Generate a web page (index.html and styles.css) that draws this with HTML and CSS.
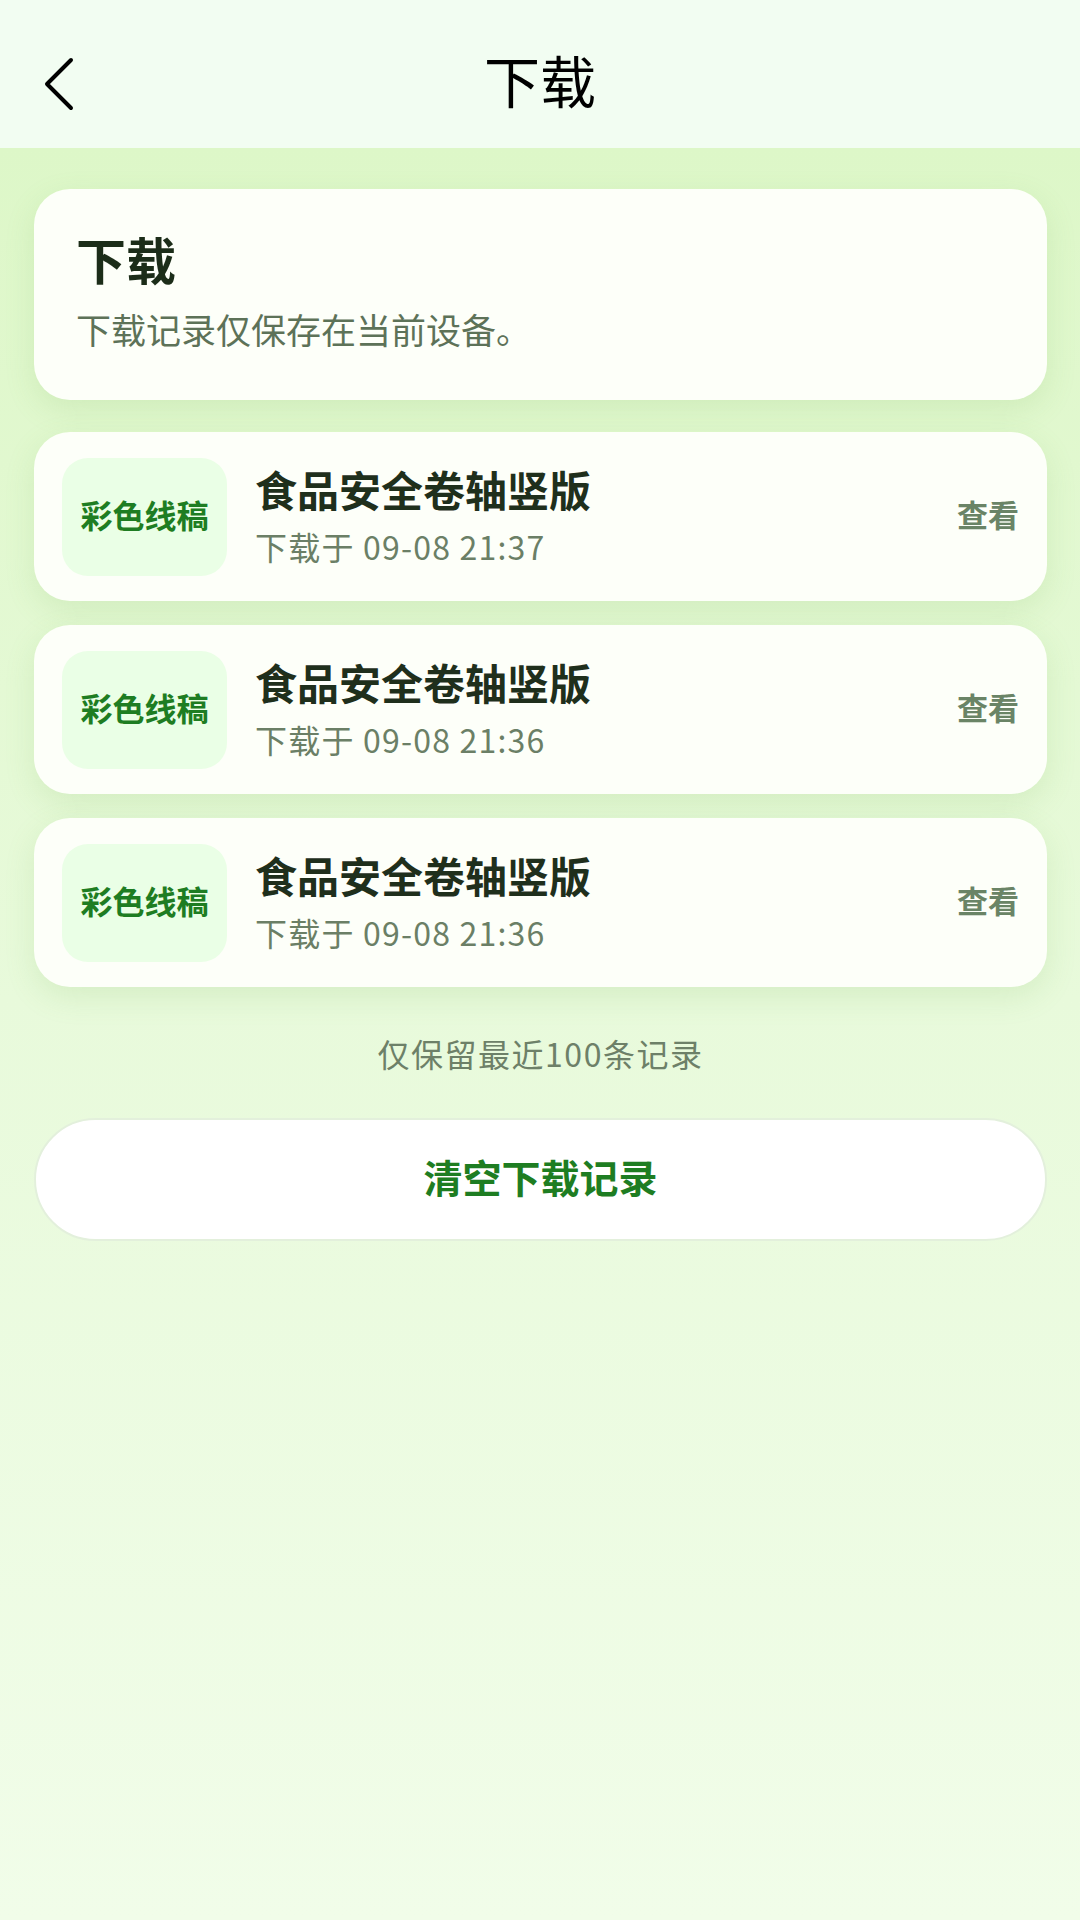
FILE: index.html
```html
<!DOCTYPE html>
<html lang="zh-CN">
<head>
  <meta charset="UTF-8">
  <meta name="viewport" content="width=device-width, initial-scale=1.0">
  <title>下载</title>
  <link rel="stylesheet" href="styles.css">
</head>
<body>
  <div class="topbar">
    <div class="back">
      <svg width="34" height="54" viewBox="0 0 34 54" fill="none">
        <path d="M29 3 L5 27 L29 51" stroke="#000" stroke-width="4" stroke-linecap="round" stroke-linejoin="round"/>
      </svg>
    </div>
    <div class="topbar-title">下载</div>
    <div></div>
  </div>

  <div class="page">
    <div class="intro">
      <h2>下载</h2>
      <p>下载记录仅保存在当前设备。</p>
    </div>

    <div class="list">
      <div class="item">
        <div class="thumb">彩色线稿</div>
        <div class="info">
          <div class="name">食品安全卷轴竖版</div>
          <div class="date">下载于 09-08 21:37</div>
        </div>
        <div class="view">查看</div>
      </div>
      <div class="item">
        <div class="thumb">彩色线稿</div>
        <div class="info">
          <div class="name">食品安全卷轴竖版</div>
          <div class="date">下载于 09-08 21:36</div>
        </div>
        <div class="view">查看</div>
      </div>
      <div class="item">
        <div class="thumb">彩色线稿</div>
        <div class="info">
          <div class="name">食品安全卷轴竖版</div>
          <div class="date">下载于 09-08 21:36</div>
        </div>
        <div class="view">查看</div>
      </div>
    </div>

    <div class="note">仅保留最近100条记录</div>

    <button class="clear">清空下载记录</button>
  </div>
</body>
</html>
```

FILE: styles.css
```css
body {
  font-family: 'Noto Sans CJK SC', 'Noto Sans', sans-serif;
  margin: 0;
  padding: 0;
  width: 1080px;
  min-height: 1920px;
  color: #1f2f1c;
  background: linear-gradient(180deg, #ddf7c8 148px, #e8fadb 1000px, #f1fde9 1920px);
}
.topbar {
  height: 148px;
  background-color: #f2fdf2;
  display: grid;
  grid-template-columns: 1fr auto 1fr;
  align-items: center;
}
.back {
  padding: 20px 0 0 42px;
  display: flex;
  align-items: center;
}
.topbar-title {
  font-size: 56px;
  font-weight: 400;
  color: #000;
  line-height: 1;
  padding-top: 10px;
}
.page {
  padding: 41px 33px 0 34px;
}
.intro {
  background-color: #fdfff9;
  border-radius: 36px;
  padding: 39px 42px 47px;
  box-shadow: 0 10px 30px rgba(120, 180, 90, 0.16);
}
.intro h2 {
  margin: 0;
  font-size: 50px;
  line-height: 60px;
  font-weight: 700;
  color: #1c2d19;
}
.intro p {
  margin: 17px 0 0;
  font-size: 35px;
  line-height: 48px;
  color: #5d7258;
}
.list {
  margin-top: 32px;
  display: flex;
  flex-direction: column;
  gap: 24px;
}
.item {
  background-color: #fdfff9;
  border-radius: 36px;
  padding: 26px 28px 25px;
  display: flex;
  align-items: center;
  box-shadow: 0 10px 30px rgba(120, 180, 90, 0.16);
}
.thumb {
  width: 165px;
  height: 112px;
  padding-bottom: 6px;
  border-radius: 26px;
  background-color: #eaffe6;
  color: #1e7d22;
  font-size: 32px;
  font-weight: 700;
  display: flex;
  align-items: center;
  justify-content: center;
  flex-shrink: 0;
}
.info {
  flex: 1;
  margin-left: 28px;
  padding-bottom: 4px;
}
.name {
  font-size: 42px;
  line-height: 54px;
  font-weight: 700;
  color: #1f2f1c;
}
.date {
  margin-top: 8px;
  font-size: 32px;
  line-height: 44px;
  letter-spacing: 1.2px;
  color: #6b7f66;
}
.view {
  font-size: 31px;
  font-weight: 700;
  color: #6a8466;
  padding-bottom: 8px;
}
.note {
  margin-top: 44px;
  text-align: center;
  font-size: 32px;
  line-height: 44px;
  letter-spacing: 1.5px;
  color: #6d8068;
}
.clear {
  display: block;
  width: 100%;
  margin-top: 43px;
  height: 123px;
  padding-bottom: 8px;
  border-radius: 62px;
  background-color: #ffffff;
  border: 2px solid #e3f0dc;
  font-family: inherit;
  font-size: 39px;
  font-weight: 700;
  color: #1e7d22;
}
```
